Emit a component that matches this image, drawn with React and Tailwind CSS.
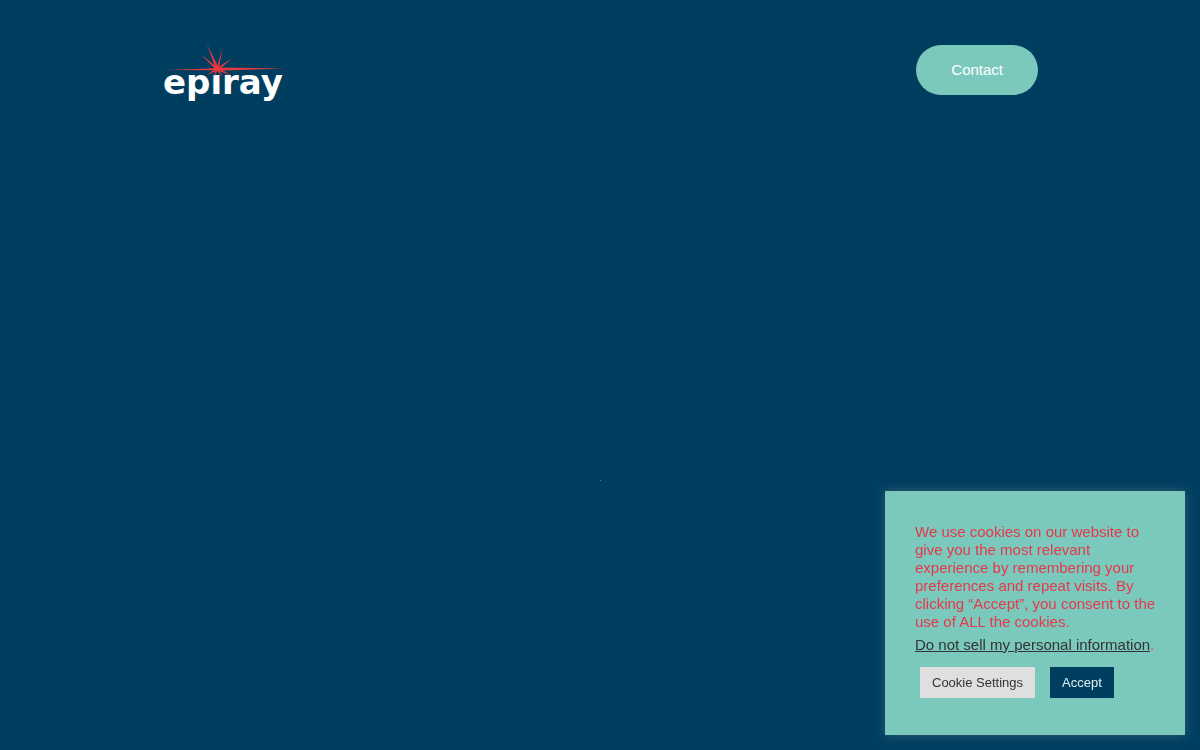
import React, { useState } from "react";

const Logo = () => (
  <svg
    width="128"
    height="64"
    viewBox="0 0 128 64"
    role="img"
    aria-label="epiray"
  >
    {/* Wordmark */}
    <text
      x="1"
      y="56"
      fill="#ffffff"
      fontSize="34"
      fontWeight="700"
      fontFamily="'DejaVu Sans', sans-serif"
    >
      epıray
    </text>

    {/* Laser flare */}
    <g fill="#e5383f">
      <path d="M3 32 L48 30.4 L56 29.4 L123 30.6 L62 32.4 L50 32.2 Z" />
      <path d="M44.5 5.5 L56.4 29 L54 31 Z" />
      <path d="M60.6 9.5 L56.8 31 L54.8 30 Z" />
      <path d="M38.5 16 L55.5 29.4 L53.8 31.4 Z" />
      <path d="M69.5 20.5 L57 32 L55 30 Z" />
      <path d="M44.5 37.5 L54 30 L56 32 Z" />
      <path d="M69 37.5 L55.5 32.4 L57 30 Z" />
      <path d="M51.5 39.5 L54.2 30.5 L56.2 31.5 Z" />
      <path d="M60.5 39 L54.6 32 L57 30.8 Z" />
      <circle cx="55.4" cy="30.8" r="2.4" />
    </g>
  </svg>
);

const CookieBanner = ({ onClose }) => {
  return (
    <section
      aria-label="Cookie consent"
      className="fixed bottom-[15px] right-[15px] w-[300px] max-w-full bg-[#7bc8bd] pl-[30px] pr-6 pt-8 pb-[37px] text-[15px] leading-[18px] text-[#e5394b] shadow-[0_0_10px_rgba(172,171,171,0.3)]"
    >
      <p>
        We use cookies on our website to give you the most relevant experience
        by remembering your preferences and repeat visits. By clicking
        “Accept”, you consent to the use of ALL the cookies.
      </p>
      <p className="mt-[5px] whitespace-nowrap">
        <a href="#privacy" className="text-[#333333] underline">
          Do not sell my personal information
        </a>
        .
      </p>

      {/* Actions */}
      <div className="mt-[13px] ml-[5px] flex gap-[15px] text-[13px] leading-[15px]">
        <button type="button" className="bg-[#dedfde] px-3 py-2 text-[#333333]">
          Cookie Settings
        </button>
        <button
          type="button"
          onClick={onClose}
          className="bg-[#003e60] px-3 py-2 text-[#dff2f4]"
        >
          Accept
        </button>
      </div>
    </section>
  );
};

const App = () => {
  const [showCookies, setShowCookies] = useState(true);

  return (
    <div className="min-h-screen bg-[#003e60] font-['Liberation_Sans',Arial,sans-serif]">
      {/* Header */}
      <header className="mx-auto flex w-[73%] items-center justify-between pt-[38px]">
        <a href="/">
          <Logo />
        </a>
        <a
          href="#contact"
          className="rounded-full bg-[#7bc8bd] px-[35px] py-[15px] text-[15px] leading-5 text-white"
        >
          Contact
        </a>
      </header>

      <main className="flex justify-center pt-[378px]">
        <span className="size-px bg-[#4a7f99]" />
      </main>

      {showCookies && <CookieBanner onClose={() => setShowCookies(false)} />}
    </div>
  );
};

export default App;
